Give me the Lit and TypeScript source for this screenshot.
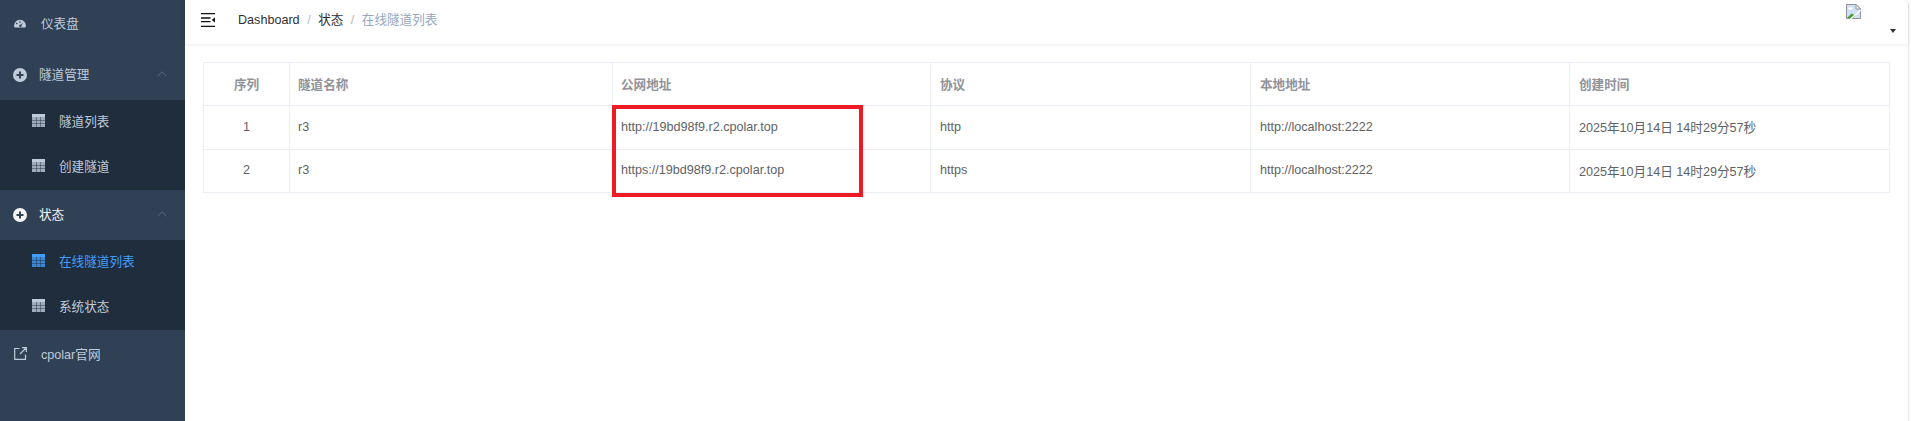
import { LitElement, html, css } from "lit";
import { customElement } from "lit/decorators.js";

const grid = html`<svg class="ic" width="13" height="13" viewBox="0 0 13 13"><rect width="13" height="13" fill="currentColor" opacity=".8"/><rect y="0" width="13" height="3" fill="currentColor"/><path d="M0 6.5h13M0 9.5h13M4.5 3v10M8.5 3v10" stroke="#1f2d3d" stroke-opacity=".45" stroke-width="1"/></svg>`;
const circle = html`<svg class="ic circ" width="14" height="14" viewBox="0 0 14 14"><path fill-rule="evenodd" d="M7 0a7 7 0 1 1 0 14A7 7 0 0 1 7 0zM6 3.5V6H3.5v2H6v2.500h2V8h2.500V6H8V3.500z" fill="currentColor"/></svg>`;
const chevron = html`<svg class="chev" width="10" height="6" viewBox="0 0 10 6"><path d="M.5 5.2 5 .8l4.500 4.400" fill="none" stroke="currentColor" stroke-width="1"/></svg>`;

const rows = [
  ["1", "r3", "http://19bd98f9.r2.cpolar.top", "http", "http://localhost:2222", "2025年10月14日 14时29分57秒"],
  ["2", "r3", "https://19bd98f9.r2.cpolar.top", "https", "http://localhost:2222", "2025年10月14日 14时29分57秒"],
];
const heads = ["序列", "隧道名称", "公网地址", "协议", "本地地址", "创建时间"];

@customElement("app-root")
export class AppRoot extends LitElement {
  static styles = css`
    :host { display: block; height: 421px; width: 1911px; overflow: hidden; font-family: "Liberation Sans", "Noto Sans CJK SC", sans-serif; font-size: 12.6px; }
    .app { display: flex; height: 421px; background: #fff; }
    .side { width: 185px; flex: none; background: #304156; color: #bfcbd9; }
    .item { height: 50px; box-sizing: border-box; padding-bottom: 4px; display: flex; align-items: center; padding-left: 13px; position: relative; }
    .item .ic { flex: none; }
    .item .label { margin-left: 12px; }
    .item.open-active { color: #f4f4f5; }
    .dash { padding-left: 14px; padding-bottom: 5px; }
    .ext { padding-left: 14px; }
    .dash .label { margin-left: 15px; }
    .ext .label { margin-left: 14px; }
    .circ { margin-top: 3px; }
    .chev { position: absolute; right: 18px; top: 21px; color: #5d6b7c; }
    .sub { background: #1f2d3d; }
    .sub .row { height: 45px; box-sizing: border-box; padding-bottom: 5px; display: flex; align-items: center; padding-left: 32px; }
    .sub .row .label { margin-left: 14px; }
    .sub .row.on { color: #409eff; }
    .main { flex: 1; min-width: 0; position: relative; background: #fcfcfc; }
    .page { position: absolute; left: 0; top: 0; bottom: 0; width: 1723px; background: #fff; border-right: 1px solid #e9e9e9; border-top-right-radius: 6px; }
    .nav { height: 44px; box-sizing: border-box; padding-bottom: 4px; display: flex; align-items: center; box-shadow: 0 1px 4px rgba(0, 21, 41, 0.08); position: relative; }
    .ham { margin-left: 16px; flex: none; }
    .crumb { margin-left: 23px; display: flex; align-items: baseline; line-height: 20px; color: #303133; }
    .crumb .sep { color: #b4b9c2; margin: 0 7.5px; }
    .crumb .last { color: #97a8be; }
    .broken { position: absolute; left: 1661px; top: 4px; }
    .caret { position: absolute; left: 1705px; top: 29px; width: 0; height: 0; border: 3.500px solid transparent; border-top: 4px solid #303133; border-bottom: 0; }
    .content { padding: 18px 21px 0 18px; position: relative; }
    .tbl { display: grid; grid-template-columns: 86px 323px 318px 320px 319px 320px; grid-template-rows: 43px 44px 42px; border: 1px solid #ebeef5; width: 1687px; box-sizing: border-box; color: #606266; }
    .c { box-sizing: border-box; border-right: 1px solid #ebeef5; border-bottom: 1px solid #ebeef5; display: flex; align-items: center; padding-left: 8px; padding-bottom: 2px; }
    .c.h { color: #909399; font-weight: 700; }
    .c.ctr { justify-content: center; padding-left: 0; }
    .c.end { border-right: 0; }
    .c.last { border-bottom: 0; }
    .c.pad { padding-left: 9px; }
    .mark { position: absolute; left: 427px; top: 61px; width: 251px; height: 92px; box-sizing: border-box; border: 4px solid #ed1c24; }
  `;

  render() {
    return html`<div class="app">
      <aside class="side">
        <div class="item dash">
          <svg class="ic" width="12" height="12" viewBox="0 0 13 13"><path fill-rule="evenodd" d="M.3 10.600A6.300 6.300 0 0 1 6.500 3a6.300 6.300 0 0 1 6.200 7.600l-.3.900H.6zM3 6.200a.9.9 0 1 0 0 1.800.9.9 0 0 0 0-1.800zm3.500-1.600a.9.9 0 1 0 0 1.800.9.9 0 0 0 0-1.800zm3.300 1.500-2.400 2.200a1.300 1.300 0 1 0 .8.800z" fill="currentColor"/></svg>
          <span class="label">仪表盘</span>
        </div>
        <div class="item">${circle}<span class="label">隧道管理</span>${chevron}</div>
        <div class="sub">
          <div class="row">${grid}<span class="label">隧道列表</span></div>
          <div class="row">${grid}<span class="label">创建隧道</span></div>
        </div>
        <div class="item open-active">${circle}<span class="label">状态</span>${chevron}</div>
        <div class="sub">
          <div class="row on">${grid}<span class="label">在线隧道列表</span></div>
          <div class="row">${grid}<span class="label">系统状态</span></div>
        </div>
        <div class="item ext">
          <svg class="ic" width="13" height="13" viewBox="0 0 13 13"><path d="M5.500 1.500H.7v10.800h10.800V7.500M6 7l6-6M8 .7h4.300V5" fill="none" stroke="currentColor" stroke-width="1.200"/></svg>
          <span class="label">cpolar官网</span>
        </div>
      </aside>
      <main class="main">
        <div class="page">
          <div class="nav">
            <svg class="ham" width="14" height="14" viewBox="0 0 14 14"><path d="M0 .7h14M0 5h9.500M0 8.700h9.500M0 13.300h14" stroke="#111" stroke-width="1.300"/><path d="M14 4.300v5.200L10.800 6.900z" fill="#111"/></svg>
            <div class="crumb"><span>Dashboard</span><span class="sep">/</span><span>状态</span><span class="sep">/</span><span class="last">在线隧道列表</span></div>
            <svg class="broken" width="15" height="15" viewBox="0 0 15 15"><path d="M.5.5h9.500l4.500 4.500v9.500H.5z" fill="#cfe0f5" stroke="#8f9499"/><path d="M10 .5v4.500h4.500z" fill="#fff" stroke="#8f9499"/><path d="M1 14l4.500-4.500 4 2-2.500 2.500z" fill="#4aa02c"/><ellipse cx="4.500" cy="4.500" rx="2.500" ry="1.300" fill="#fff"/><path d="M15 6 4.500 15" stroke="#fff" stroke-width="1.300"/></svg>
            <span class="caret"></span>
          </div>
          <div class="content">
            <div class="tbl">
              ${heads.map((t, i) => html`<div class="c h ${i === 0 ? "ctr" : ""} ${i === 5 ? "end" : ""} ${i >= 3 ? "pad" : ""}">${t}</div>`)}
              ${rows.map((r, ri) => r.map((t, i) => html`<div class="c ${i === 0 ? "ctr" : ""} ${i === 5 ? "end" : ""} ${i >= 3 ? "pad" : ""} ${ri === 1 ? "last" : ""}">${t}</div>`))}
            </div>
            <div class="mark"></div>
          </div>
        </div>
      </main>
    </div>`;
  }
}
